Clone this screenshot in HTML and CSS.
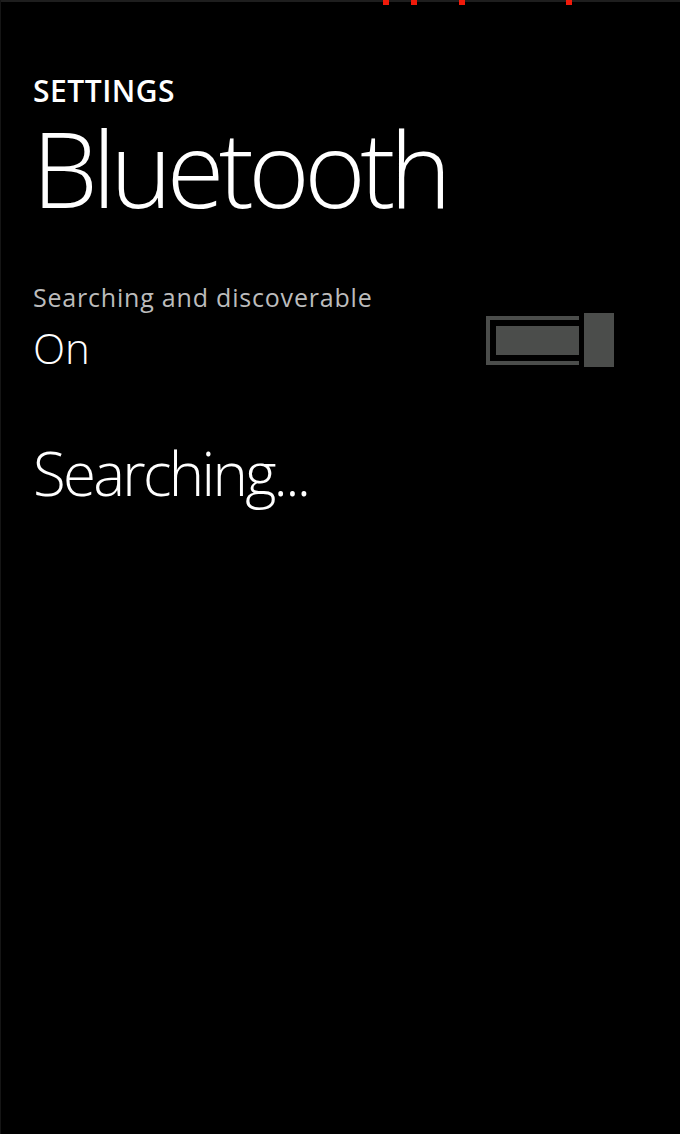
FILE: index.html
```html
<!DOCTYPE html>
<html>
<head>
<meta charset="utf-8">
<link rel="stylesheet" href="styles.css">
</head>
<body>
<div class="screen">
  <div class="status">
    <span class="dot d1"></span>
    <span class="dot d2"></span>
    <span class="dot d3"></span>
    <span class="dot d4"></span>
  </div>
  <div class="content">
    <div class="app-title">SETTINGS</div>
    <h1 class="page-title">Bluetooth</h1>
    <div class="toggle-row">
      <div class="toggle-text">
        <div class="toggle-label">Searching and discoverable</div>
        <div class="toggle-value">On</div>
      </div>
      <div class="switch">
        <div class="switch-track">
          <div class="switch-fill"></div>
        </div>
        <div class="switch-thumb"></div>
      </div>
    </div>
    <div class="searching">Searching...</div>
  </div>
</div>
</body>
</html>
```
FILE: styles.css
```css
html, body {
  margin: 0;
  padding: 0;
  background: #000;
}
.screen {
  width: 680px;
  height: 1134px;
  background: #000;
  color: #fff;
  font-family: "Open Sans", "Noto Sans", sans-serif;
  border-left: 1px solid #151515;
  box-sizing: border-box;
}
.status {
  height: 6px;
  border-top: 2px solid #1e1e1e;
  display: flex;
  padding-left: 382px;
  box-sizing: border-box;
}
.dot {
  width: 6px;
  height: 5px;
  background: #f01a0a;
  margin-top: -2px;
}
.d2 { margin-left: 22px; }
.d3 { margin-left: 42px; }
.d4 { margin-left: 101px; }
.content {
  padding-left: 32px;
  padding-right: 66px;
}
.app-title {
  font-weight: 600;
  font-size: 30px;
  line-height: 36px;
  margin-top: 67px;
  letter-spacing: 0.5px;
}
.page-title {
  margin: 9px 0 0 -1px;
  font-weight: 300;
  font-size: 105px;
  line-height: 100px;
  letter-spacing: -5.6px;
}
.toggle-row {
  display: flex;
  justify-content: space-between;
  align-items: flex-start;
  margin-top: 64px;
}
.toggle-label {
  font-size: 25px;
  line-height: 30px;
  color: #bcbcbc;
  letter-spacing: 0.8px;
}
.toggle-value {
  font-size: 42px;
  line-height: 50px;
  font-weight: 300;
  margin-top: 11px;
}
.switch {
  display: flex;
  align-items: center;
  margin-top: 31px;
  gap: 5px;
}
.switch-track {
  width: 93px;
  height: 49px;
  border: 4px solid #4b4d4b;
  border-right: none;
  box-sizing: border-box;
  display: flex;
  align-items: center;
  padding-left: 6px;
}
.switch-fill {
  width: 83px;
  height: 29px;
  background: #4b4d4b;
}
.switch-thumb {
  width: 30px;
  height: 54px;
  background: #4b4d4b;
}
.searching {
  font-size: 60px;
  line-height: 80px;
  font-weight: 300;
  margin-top: 60px;
  letter-spacing: -2.7px;
}
```
